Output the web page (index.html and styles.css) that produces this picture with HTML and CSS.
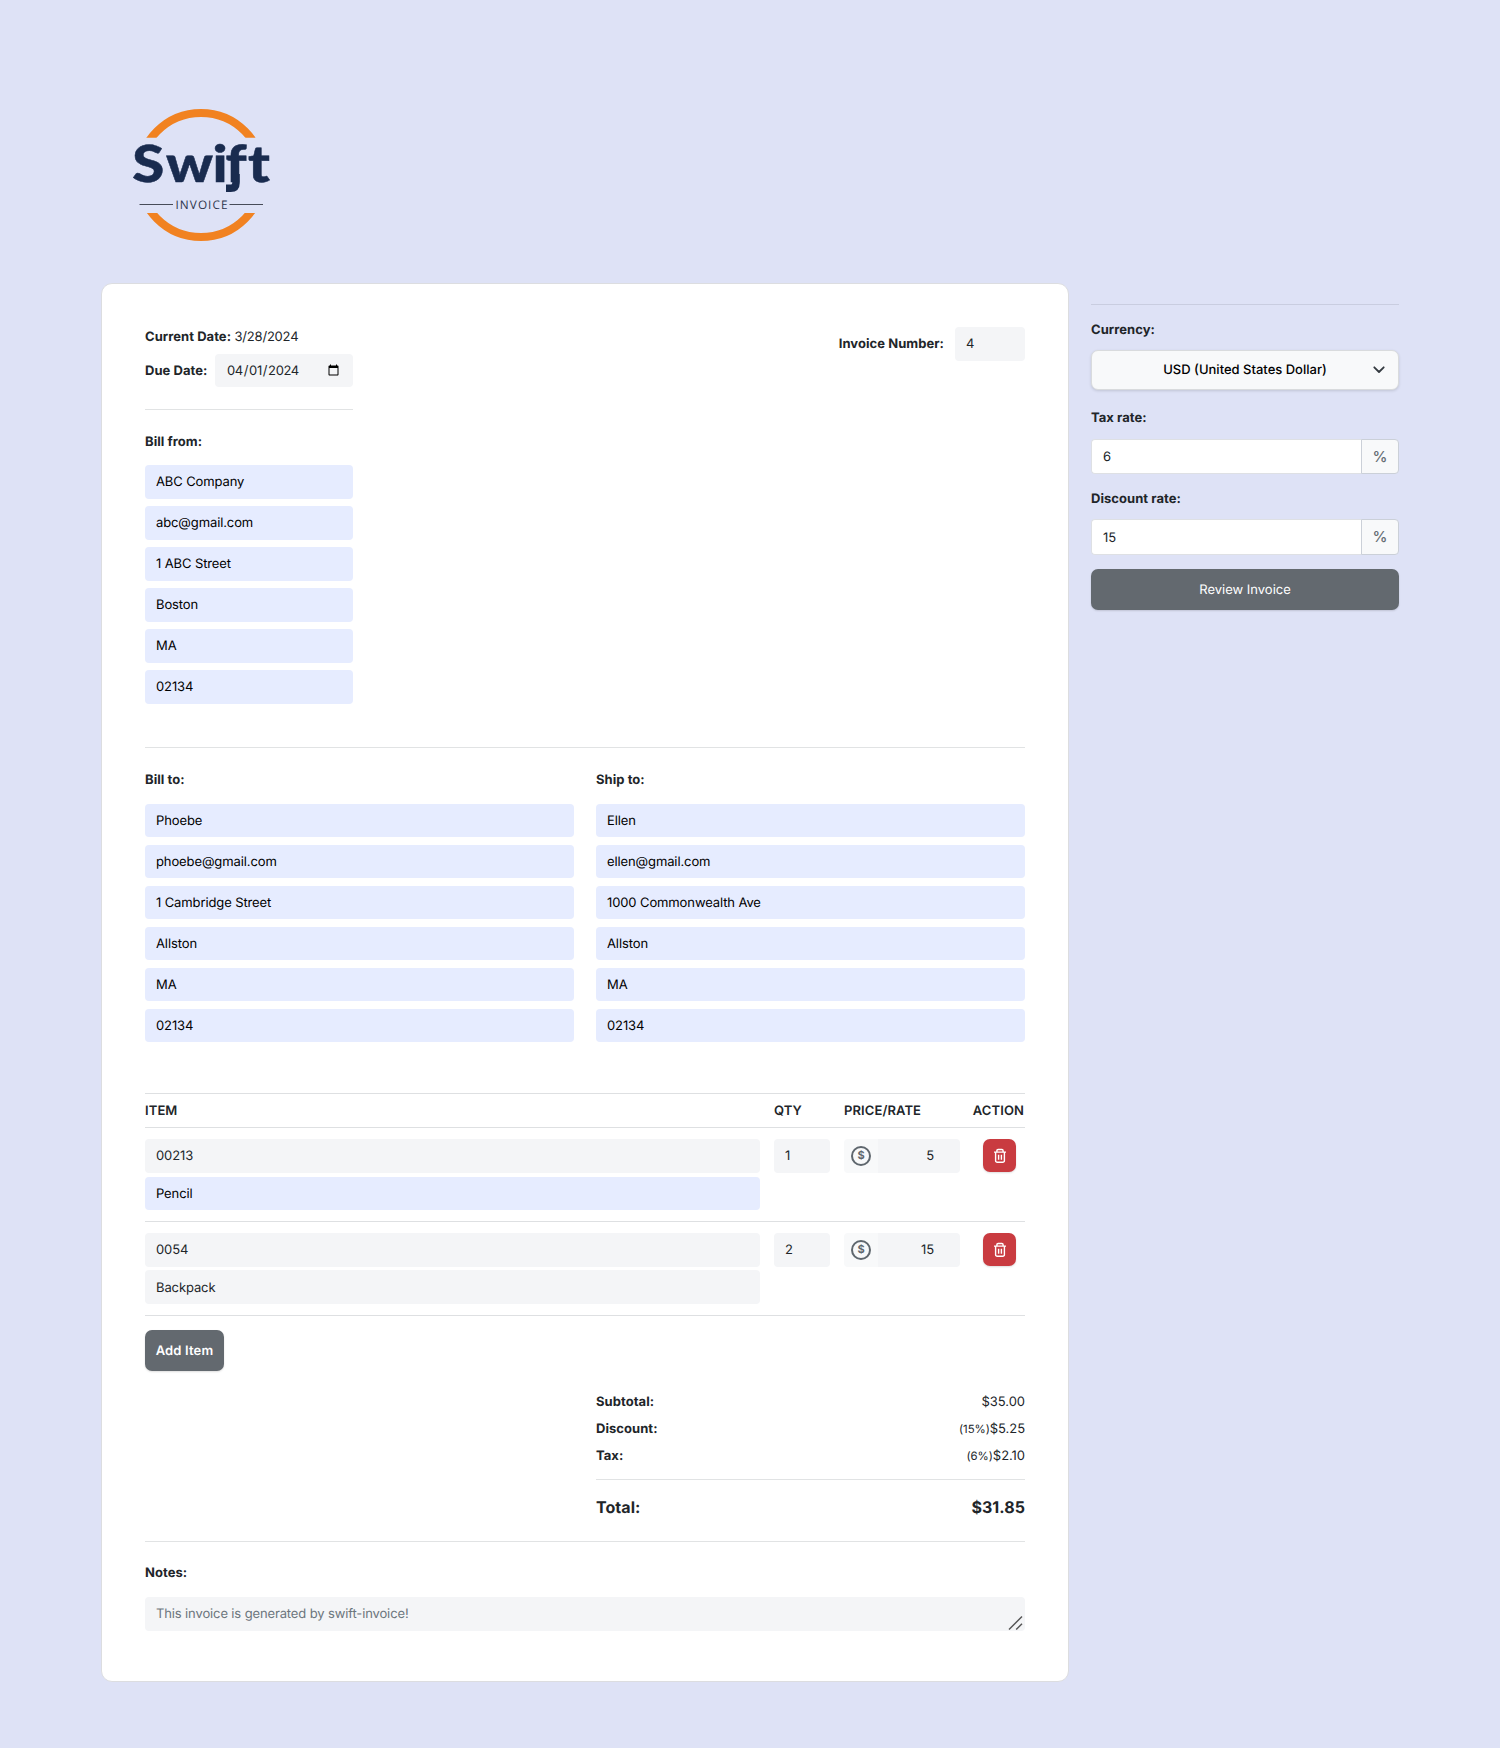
FILE: index.html
```html
<!DOCTYPE html>
<html lang="en-US">
<head>
<meta charset="utf-8">
<title>Swift Invoice</title>
<link rel="stylesheet" href="styles.css">
</head>
<body>
<svg class="symbols" width="0" height="0" aria-hidden="true">
  <symbol id="trash" viewBox="0 0 14 16">
    <path d="M1 4.1h12M2.6 4.4v8.3a1.6 1.6 0 0 0 1.6 1.6h5.6a1.6 1.6 0 0 0 1.6-1.6V4.4M3.9 3.8V2.7a1.2 1.2 0 0 1 1.2-1.2h3.8a1.2 1.2 0 0 1 1.2 1.2v1.1M5.6 6.7v5M8.4 6.7v5" fill="none" stroke="currentColor" stroke-width="1.4"/>
  </symbol>
</svg>
<header class="brand">
  <svg class="logo" width="150" height="140" viewBox="0 0 150 140" role="img" aria-label="Swift Invoice">
    <clipPath id="caps"><path d="M0 0h150v33.700H0zM0 109h150v31H0z"/></clipPath>
    <circle cx="75" cy="71" r="62" fill="none" stroke="#f18221" stroke-width="8" clip-path="url(#caps)"/>
    <text class="logo-name" y="77.500" transform="scale(1.14 1)"><tspan x="5.400">S</tspan><tspan x="35">w</tspan><tspan x="75.800">i</tspan><tspan x="87.200">f</tspan><tspan x="107">t</tspan></text>
    <path class="swash" d="M110 70v9q0 5.300-5.300 5.300H100"/>
    <path d="M13.500 100.500h33.500M103.500 100.500h33.500" stroke="#474b58" stroke-width="1"/>
    <text class="logo-sub" x="49.500" y="104.800" textLength="52">INVOICE</text>
  </svg>
</header>
<main class="layout">
  <form class="card">
    <section class="top">
      <div class="sender">
        <div class="current"><b>Current Date:</b> 3/28/2024</div>
        <div class="due"><b>Due Date:</b><input class="field date" type="date" value="2024-04-01"></div>
        <hr class="rule">
        <h2 class="label">Bill from:</h2>
        <div class="stack tall">
          <input class="field filled" value="ABC Company">
          <input class="field filled" value="abc@gmail.com">
          <input class="field filled" value="1 ABC Street">
          <input class="field filled" value="Boston">
          <input class="field filled" value="MA">
          <input class="field filled" value="02134">
        </div>
      </div>
      <div class="number"><b>Invoice Number:</b><input class="field" value="4"></div>
    </section>
    <hr class="rule">
    <section class="parties">
      <div>
        <h2 class="label">Bill to:</h2>
        <div class="stack">
          <input class="field filled" value="Phoebe">
          <input class="field filled" value="phoebe@gmail.com">
          <input class="field filled" value="1 Cambridge Street">
          <input class="field filled" value="Allston">
          <input class="field filled" value="MA">
          <input class="field filled" value="02134">
        </div>
      </div>
      <div>
        <h2 class="label">Ship to:</h2>
        <div class="stack">
          <input class="field filled" value="Ellen">
          <input class="field filled" value="ellen@gmail.com">
          <input class="field filled" value="1000 Commonwealth Ave">
          <input class="field filled" value="Allston">
          <input class="field filled" value="MA">
          <input class="field filled" value="02134">
        </div>
      </div>
    </section>
    <section class="items">
      <div class="row head"><span>ITEM</span><span>QTY</span><span>PRICE/RATE</span><span class="action">ACTION</span></div>
      <div class="row item">
        <div class="names"><input class="field" value="00213"><input class="field filled short" value="Pencil"></div>
        <input class="field" value="1">
        <div class="price"><span class="coin"><i>$</i></span><input class="field" value="5"></div>
        <button class="delete" type="button" aria-label="Delete"><svg width="14" height="16"><use href="#trash"/></svg></button>
      </div>
      <div class="row item second">
        <div class="names"><input class="field" value="0054"><input class="field low" value="Backpack"></div>
        <input class="field" value="2">
        <div class="price"><span class="coin"><i>$</i></span><input class="field" value="15"></div>
        <button class="delete" type="button" aria-label="Delete"><svg width="14" height="16"><use href="#trash"/></svg></button>
      </div>
    </section>
    <button class="btn add" type="button">Add Item</button>
    <section class="totals">
      <div class="sum"><b>Subtotal:</b><span>$35.00</span></div>
      <div class="sum"><b>Discount:</b><span><small>(15%)</small>$5.25</span></div>
      <div class="sum"><b>Tax:</b><span><small>(6%)</small>$2.10</span></div>
      <hr class="rule">
      <div class="sum grand"><b>Total:</b><b>$31.85</b></div>
    </section>
    <hr class="rule">
    <h2 class="label notes-label">Notes:</h2>
    <div class="notes">
      <textarea class="field" rows="1" placeholder="This invoice is generated by swift-invoice!"></textarea>
      <svg class="grip" width="16" height="16" viewBox="0 0 16 16"><path d="M1 14.500L14 1.500M8.200 14.500L14 8.700" stroke="#555" stroke-width="1.500"/></svg>
    </div>
  </form>
  <aside class="side">
    <hr class="rule">
    <h2 class="label">Currency:</h2>
    <button class="select" type="button"><span>USD (United States Dollar)</span><svg width="12" height="8" viewBox="0 0 12 8"><path d="M1.300 1.300L6 6l4.700-4.700" fill="none" stroke="#343a40" stroke-width="1.800" stroke-linecap="round" stroke-linejoin="round"/></svg></button>
    <h2 class="label tax">Tax rate:</h2>
    <div class="rate"><input value="6"><span>%</span></div>
    <h2 class="label discount">Discount rate:</h2>
    <div class="rate larger"><input value="15"><span>%</span></div>
    <button class="btn review" type="button">Review Invoice</button>
  </aside>
</main>
</body>
</html>
```
FILE: styles.css
```css
* { box-sizing: border-box; }
body {
  margin: 0;
  min-height: 1748px;
  padding: 104px 101px 0 101px;
  background: #dee2f6;
  color: #212529;
  font: 13px/20px Inter, "Liberation Sans", sans-serif;
  text-rendering: geometricPrecision;
}
input, textarea, button { font: inherit; letter-spacing: inherit; color: inherit; margin: 0; text-rendering: inherit; }
b, .label { font-weight: 700; letter-spacing: .05px; }
.symbols { display: none; }
.brand { height: 179px; padding-left: 25px; }
.logo { display: block; }
.logo-name { font: 900 51px Lato, sans-serif; fill: #192b4f; stroke: #192b4f; stroke-width: .5; }
.logo-sub { font: 400 11.800px "Open Sans", sans-serif; fill: #2c344c; }
.swash { fill: none; stroke: #192b4f; stroke-width: 7.500; }
.layout { display: flex; align-items: flex-start; gap: 22px; }
.card {
  width: 968px;
  height: 1399px;
  padding: 43px 43px 0 43px;
  border: 1px solid #dcdde0;
  border-radius: 11px;
  background: #fff;
}
.rule { height: 1px; margin: 0; border: 0; background: #e1e3e4; }
.label { margin: 0; font-size: 13px; line-height: 20px; }
.field {
  display: block;
  width: 100%;
  height: 34px;
  padding: 0 11px 1px;
  border: 0;
  border-radius: 4px;
  background: #f4f5f7;
  outline: 0;
  letter-spacing: -.11px;
}
.filled { background: #e6ecff; color: #000; }
.stack { display: grid; gap: 8px; }
.stack .field { height: 33px; padding-bottom: 0; }
.stack.tall { gap: 7px; }
.stack.tall .field { height: 34px; padding-bottom: 1px; }
.top { display: flex; justify-content: space-between; height: 420px; }
.sender { width: 208px; }
.current { height: 27px; letter-spacing: -.2px; }
.due { display: flex; align-items: center; justify-content: space-between; }
.number b { padding-bottom: 1px; }
.date { width: 138px; height: 33px; padding-bottom: 0; letter-spacing: -.4px; }
.sender .rule { margin: 22px 0; }
.sender .label { margin-bottom: 13px; }
.number { display: flex; align-items: center; height: 34px; gap: 11px; }
.number .field { width: 70px; }
.parties { display: grid; grid-template-columns: 1fr 1fr; gap: 22px; margin-top: 22px; }
.parties .label { margin-bottom: 14px; }
.items { margin-top: 51px; }
.row { display: grid; grid-template-columns: 615px 56px 116px 50px; column-gap: 14px; border-bottom: 1px solid #dee0e2; }
.head { height: 35px; border-top: 1px solid #dee0e2; font-weight: 600; line-height: 35px; letter-spacing: .1px; }
.action { display: flex; justify-content: flex-end; }
.item { height: 94px; padding-top: 11px; align-items: start; }
.names { display: grid; gap: 4px; }
.short { height: 33px; padding-bottom: 0; }
.second .names { gap: 3px; }
.low { padding: 1px 11px 0; }
.price { display: flex; }
.price .field { border-radius: 0 4px 4px 0; padding-right: 26px; text-align: right; }
.coin { display: grid; place-items: center; flex: 0 0 34px; height: 34px; border-radius: 4px 0 0 4px; background: #f8f9fa; }
.coin i { width: 20px; height: 20px; border: 2px solid #5f676e; border-radius: 50%; color: #5f676e; font: 700 11px/15px Inter, sans-serif; text-align: center; }
.delete { display: grid; place-items: center; justify-self: center; width: 33px; height: 33px; margin-left: 1px; padding: 0; border: 0; border-radius: 7px; background: #c93b40; color: #fff; box-shadow: 0 1px 2px #0002; }
.btn { display: block; height: 41px; padding: 1px 0 0; border: 0; border-radius: 7px; background: #63696f; color: #fff; box-shadow: 0 1px 2px #0002; }
.add { width: 79px; margin-top: 14px; font-weight: 600; letter-spacing: .15px; }
.totals { width: 429px; margin: 21px 0 23px auto; }
.sum { display: flex; justify-content: space-between; height: 27px; letter-spacing: -.05px; }
.sum small { font-size: 11.400px; }
.totals .rule { margin: 6px 0 17px; }
.grand { height: 21px; font-size: 16px; }
.notes-label { margin: 21px 0 14px; }
.notes { position: relative; }
.notes textarea { padding: 7px 11px; resize: none; overflow: hidden; letter-spacing: -.13px; }
.notes textarea::placeholder { color: #6c757d; }
.grip { position: absolute; right: 1px; bottom: 0; }
.side { width: 308px; padding-top: 21px; }
.side .rule { background: #c9cde0; }
.side .label { margin: 15px 0 10px; }
.select { display: grid; grid-template-columns: 12px 1fr 12px; align-items: center; width: 100%; height: 40px; padding: 0 13px; border: 1px solid #d9dbdd; border-radius: 7px; background: #f8f9fa; color: #000; font-weight: 500; box-shadow: 0 1px 3px #0002; }
.select span { grid-column: 2; padding-bottom: 1px; }
.side .tax { margin: 18px 0 11px; }
.side .discount { margin: 15px 0 10px; }
.rate { display: flex; height: 35px; }
.rate input { flex: 1; min-width: 0; padding: 1px 11px 0; border: 1px solid #dee0e4; border-right: 0; border-radius: 4px 0 0 4px; background: #fff; }
.rate span { display: grid; place-items: center; width: 38px; border: 1px solid #cbd0d8; border-radius: 0 4px 4px 0; background: #f8f9fa; color: #656c73; font-size: 15px; font-weight: 500; }
.larger { height: 36px; }
.review { width: 100%; margin-top: 14px; }
```
